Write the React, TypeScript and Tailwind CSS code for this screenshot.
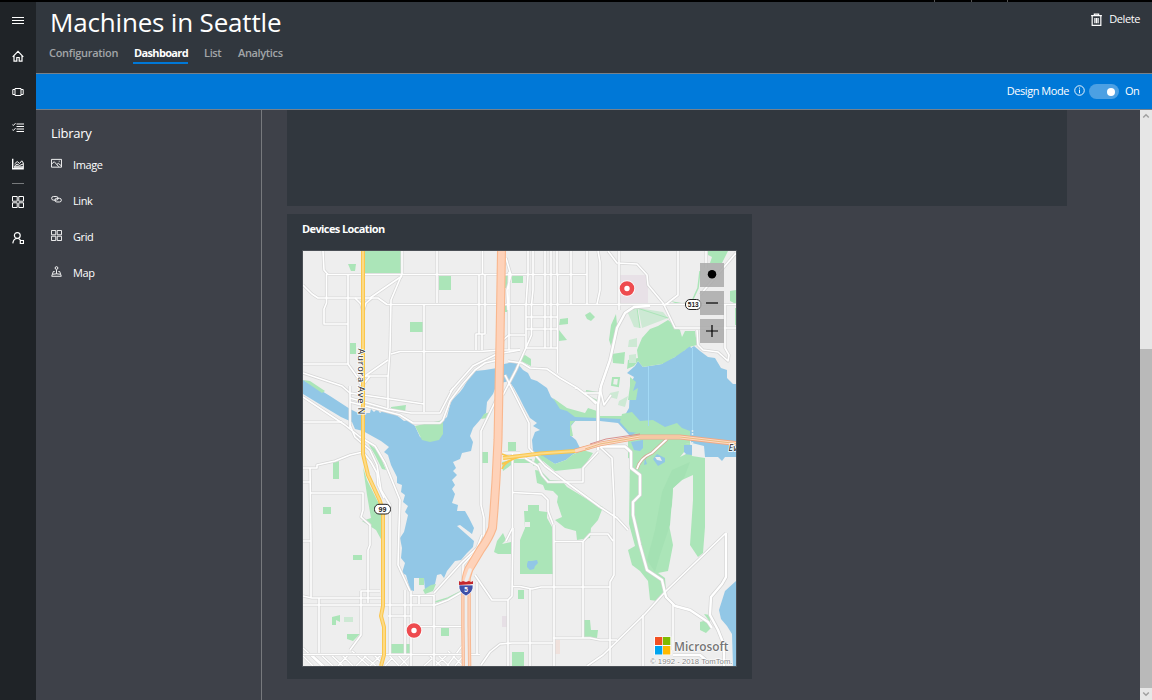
import React from "react";

const WATER = "#92c7e6";
const PARK = "#abe5b8";
const LIGHT_PARK = "#cde9d4";

const waters: string[] = [
  "303,380 312,385 330,396 350,409 358,413 370,413 371,409 374,412 377,409 380,413 384,410 388,412 393,413 399,417 404,421 408,420 415,426 420,437 430,441 440,437 443,420 447,417 450,405 452,400 460,392 463,388 469,378 475,371 485,370 497,368 504,364 513,362 518,364 523,370 528,373 531,379 537,381 547,388 551,397 557,402 567,410 580,415 600,418 617,418 625,415 629,408 630,390 633,386 631,383 634,377 627,373 635,366 638,361 643,367 662,364 665,361 675,357 677,353 685,350 688,341 691,348 694,346 700,351 708,357 715,358 721,368 727,370 727,378 733,384 736,384 736,457 725,457 722,461 718,457 705,457 704,446 692,443 689,438 660,438 630,436 618,423 600,421 575,421 571,426 570,435 576,440 581,450 572,455 566,460 555,464 543,457 533,451 532,440 535,432 540,430 533,426 537,423 530,418 524,407 519,397 514,388 509,381 497,384 493,394 487,402 486,413 473,428 470,436 473,442 471,451 462,453 460,459 453,462 456,468 453,471 457,475 452,480 455,485 452,489 455,494 452,503 458,505 457,511 465,511 469,518 474,528 472,534 460,525 457,526 474,541 473,547 467,553 461,560 455,561 447,571 444,578 441,574 437,575 435,584 430,590 425,591 424,578 419,585 419,578 414,578 414,591 410,590 408,582 406,575 402,573 405,563 401,558 402,548 400,538 404,532 405,528 408,515 405,512 408,506 403,502 405,495 401,492 402,485 397,483 397,477 391,465 388,455 384,452 389,447 381,441 372,436 363,431 355,429 352,422 341,417 326,408 303,394",
  "736,581 725,591 719,610 721,619 727,626 732,634 733,666 736,666",
];

const parks: string[] = [
  "364,251 402,251 402,274 364,273",
  "348,264 356,264 355,271 351,271",
  "439,276 451,276 451,290 439,290",
  "410,322 423,322 423,332 410,332",
  "350,343 356,343 356,354 350,354",
  "512,276 523,276 523,283 512,283",
  "505,276 508,276 507,288 504,288",
  "505,306 508,306 507,312 505,312",
  "560,319 568,318 568,324 559,325",
  "559,330 567,340 559,341",
  "585,315 590,312 595,317 591,321 587,319",
  "521,357 525,355 531,359 531,366 521,361",
  "391,407 406,405 405,412 391,409",
  "415,426 443,420 443,434 439,440 430,442 422,440",
  "333,462 339,461 339,479 333,479",
  "323,507 331,507 331,514 323,514",
  "363,467 367,480 377,500 382,508 382,541 376,530 362,521 371,518 367,495",
  "368,443 378,451 386,470 382,469 375,455",
  "482,452 488,452 488,463 482,463",
  "508,442 516,442 516,451 508,451",
  "481,419 484,414 490,412 487,418",
  "502,462 516,459 532,459 530,463 514,463 503,471",
  "353,555 362,555 362,560 353,560",
  "332,617 340,615 340,622 336,620 336,625 332,625",
  "347,634 360,634 353,641 347,639",
  "391,644 410,644 410,653 391,653",
  "441,627 449,627 449,636 441,636",
  "512,652 524,652 524,666 512,666",
  "494,552 497,541 503,533 506,540 502,544 511,542 511,554 498,554",
  "419,578 424,578 424,585 419,585",
  "423,590 431,585 436,584 433,591 425,594",
  "518,590 524,590 524,599 518,599",
  "584,620 590,620 591,630 598,630 597,638 584,638",
  "524,511 528,511 528,505 539,505 539,511 547,512 547,518 552,527 553,574 520,574 520,540 525,528",
  "533,466 543,461 555,471 583,468 593,453 583,450 572,455 566,460 555,464 543,456 536,455",
  "535,470 537,483 543,485 545,490 553,491 558,496 557,502 562,517 555,520 565,528 576,531 577,540 590,538 591,528 598,520 603,507 590,501 577,493 567,487 562,481 550,480 541,471",
  "553,398 567,408 585,413 588,408 597,411 600,416 622,416 622,419 575,417 567,411 560,409",
  "600,420 575,421 571,425 573,436 570,436 570,421",
  "628,438 645,426 653,426 665,427 677,423 682,428 690,431 690,443 672,447 660,455 650,463 628,458",
  "645,450 690,443 692,456 705,458 705,527 703,553 698,557 690,545 693,500 693,475 682,480 673,488 672,505 668,520 673,545 668,571 658,573 665,578 666,591 657,601 650,600 648,581 640,571 632,565 628,550 635,546 629,524 630,455",
  "658,326 668,320 680,330 682,337 685,331 695,331 697,345 689,347 685,350 675,357 662,364 643,367 638,361 634,366 627,369 628,360 638,358 637,350 642,338 650,329",
  "611,325 616,314 617,325 611,346 609,340",
  "612,354 625,352 624,364 613,363",
  "630,377 636,382 633,391 638,388 636,400 628,400 630,386",
  "708,251 728,251 722,263 710,263 712,257 708,255",
  "730,291 736,290 736,304 730,301",
  "670,301 682,303 693,302 693,305 680,305",
  "735,308 736,308 736,325 735,325",
  "622,414 632,412 640,421 653,420 665,427 640,433 629,432 620,422",
  "303,380 310,381 325,391 322,393",
  "700,622 707,620 711,628 706,633 700,630",
  "704,614 710,615 710,622",
];

const lightParks: string[] = [
  "627,311 637,308 640,328 634,327",
  "638,308 663,312 668,318 642,328",
  "629,340 637,338 637,347 628,347",
  "629,355 636,354 636,363 629,363",
  "610,393 619,391 617,399 609,397",
  "619,401 628,396 625,407 618,405",
  "344,617 353,617 353,622 344,622",
];

const roads: string[] = [
  "M323,251 L324,270 L328,274.5 H587",
  "M326.500,274 V303 L324,309 V324 H348",
  "M348,274 V364 M350,386 V428",
  "M303,285 L312,294 L318,298 H378 L387,304.500 H736",
  "M402,251 V274 L391,300 L390,350 L388,378 V408",
  "M402,276 L370,298 M355,298 L361,304 L363,312 M372,298 L366,303 L363,312",
  "M437,251 V303",
  "M424,305 V412",
  "M391,354 L400,351.500 H480 L500,350 H520",
  "M303,364 H348 L358,378 L365,376 L388,360",
  "M365,376 H388 M357,378 L362,386 L370,376",
  "M303,373 L342,386 L350,393 L424,404 M350,398 L388,409 L411,413 H440 L453,388",
  "M482.500,251 V275 M479,275 V334 M485,275 V334 M476,350 V334 H485 M482,334 V350",
  "M506,258 L511,275 L507,290 L508,310 M509,272 V350",
  "M528,251 V275 L526,305 V348",
  "M533,251 V290 L531.500,305 V335 L525,350 L516,370 L503,395",
  "M545,251 V348 M551,251 V348 M557,251 V275 M571,251 V304 M587,251 V304",
  "M526,317 H557 M526,329 H557 M526,348 H557 M503,340 L509,335 H525",
  "M557.500,275 V373",
  "M598,251 L600,262 V290 L597,304",
  "M508,361 L522,363 L530,368 L547,369 L560,378 L577,388 L597,403 M583,393 H600",
  "M498,360 L485,363 L475,370 L462,385 L450,401 L443,420 L440,423 H413 L400,415 L350,402",
  "M450,392 L473,366 L497,354 L520,350",
  "M303,422 H342",
  "M303,397 L345,425 L360,437 L375,446 L385,463 L400,500 L399,528 L398,565 L410,591",
  "M350,425 L355,437 L370,450 L377,465 L381,490 L390,505 V654",
  "M363,452 L371,462 L377,473 L378,485 L384,498",
  "M303,468 H317 V465 L335,461 L350,455 L363,452",
  "M303,482 H310 M310,468 L311,541 V597 M303,541 H311",
  "M311,493 H363 V510 L361,517 L370,525 V545 L368,550 V603",
  "M303,596 L312,598 H382 M303,605 H435 L448,600 L462,592",
  "M319,598 V653 M361,591 V635 L350,650 M361,591 H380",
  "M303,654.500 H480",
  "M388,616 H411 M411,591 V666 M405,590 V654 M410,595.500 H434 M419,595 V604 M434,595 V666",
  "M434,593 L462,562 L477,548 L482,535 M420,626.500 H462 M463,585 V565 L475,552",
  "M475,575 L488,594 L492,600 H508 L512,596 L513,528 M508,600 V666 M477,582 V654",
  "M513,586.500 H520 L532,589 L541,587 H610",
  "M553,643 H512 L500,644 L490,652 L481,665",
  "M530,589 V666 M554,525 V666",
  "M554,541.500 H583 L590,534 H608 L613,541 M583,541 V638",
  "M600,447 L612,458 L614,500 V575 L610,582 V663",
  "M553,638 H590 L600,640 H617",
  "M587,666 L603,655 L645,614 L666,591 L726,533",
  "M643,615 V666",
  "M673,604 V650",
  "M600,507 L617,518 L628,530",
  "M505,375 L529,423 V448 L545,466 L570,485 L600,507",
  "M598,452 L583,468 V482 H548 L542,475 L538,466 L525,458",
  "M496,400 L481,431 V505 L484,518 V545",
  "M512.500,453 V528 L506,541 M503,453 H520",
  "M513,492.500 L542,494 L548,500 V511 L553,524",
  "M619,251 V310 M608,251 L617,263 L637,264 L647,275 L648,285 L663,303 L675,328 H736",
  "M678,251 V295 L665,305 M706,251 V268",
  "M736,253 L700,295",
  "M697,330 L698,345 L703,350 L718,352 L728,361 L729,355 L725,348 V305",
  "M575,388 L577,388 M596,404 L590,398 M600,388 L604,405 L611,395",
];

const majorRoads: string[] = [
  "M650,306 L634,307 L625,313 L617,328 L610,360 L601,386 L598,405 V450",
  "M600,446.500 H625 L631,452 V468 L640,475 V495 L633,502 V515 L640,545 L647,570 L662,580 L666,597 L675,606 L690,610 L708,622 L712,628",
  "M726,533 V577 L722,584 L711,597 L710,615 L718,630 L724,645 V666",
  "M673,655 H700 L706,660",
];

const cityStreets =
  "M303,648 L322,666 M303,656 L313,666 M311,654 L324,666 M320,654 L333,666 M330,654 L343,666 M341,654 L353,666 M352,651 L369,666 M362,654 L376,666 M373,654 L383,664 M338,666 L350,653 M356,666 L368,654 M370,666 L381,655 M388,654 L399,666 M397,654 L408,666 M385,666 L392,658 M400,666 L411,655 M428,654 L441,666 M437,654 L449,666 M448,651 L463,666 M424,666 L437,654 M435,666 L447,655 M447,666 L462,646 M455,666 L464,655";

const aurora = "M363,251 V454 L368,475 L380,501 L383,512 V606 L381,616 L384,627 V655 L381,666";
const i5 = "M501.500,251 L500,340 L499,388 L498,440 L496,480 L494,510 L492.500,528 Q489,538 481,549 L469,569 Q465,578 466,590";
const hwyYellow = "M503,458 L540,453.500 L575,451 L590,447";
const hwyOrange = "M575,451 L600,444 L640,437 L680,437 L736,443.500";

function Marker({ x, y }: { x: number; y: number }) {
  return (
    <g>
      <circle cx={x} cy={y} r="8.300" fill="#fff" opacity="0.8" />
      <circle cx={x} cy={y} r="5" fill="#fff" stroke="#ee4b4f" strokeWidth="4.600" />
    </g>
  );
}

function SeattleMap() {
  return (
    <svg viewBox="303 251 433 415" className="block h-[415px] w-[433px]" fill="none">
      <rect x="303" y="251" width="433" height="415" fill="#eeeeee" />
      <rect x="620" y="275" width="28" height="29" fill="#e8e1e7" />
      <rect x="502" y="616" width="5" height="11" fill="#e6dfe5" />
      <rect x="554" y="640" width="6" height="14" fill="#f0e1dc" />
      {waters.map((p) => (
        <polygon key={p} points={p} fill={WATER} />
      ))}
      {parks.map((p) => (
        <polygon key={p} points={p} fill={PARK} />
      ))}
      <path d="M527,564 L528,561 L532,561 L537,560 L538,563 L535,566 L534,569 L530,570 L527,567Z" fill={WATER} />
      <rect x="525" y="522" width="5" height="5" fill="#eeeeee" />
      <path d="M662,492 L672,470 L690,462 L684,478 L673,488 L670,525 L660,555 L655,572 L647,560 L655,530Z" fill="#a4e1b3" />
      {lightParks.map((p) => (
        <polygon key={p} points={p} fill={LIGHT_PARK} />
      ))}
      <path d="M627,311 L637,308 L640,328 M637,308 L668,318" stroke={PARK} strokeWidth="1" />
      <path d="M575,424 H612 V434 H602 L592,444 L578,440Z" fill="#eeeeee" />
      <path d="M700,271 L698,288 L693,299 M435,602 L448,598 L462,591" stroke={PARK} strokeWidth="1.500" />
      <path d="M586,391 L598,393 M587,396 L597,401 M613,378 L619,378 L618,386 L612,385Z" stroke={PARK} strokeWidth="2" />
      <path d="M631,442 L643,440 V448 L640,451 L634,450Z M653,459 L657,454 L665,458 L665,462 L658,466Z M645,458 L647,464 L644,465Z M684,445 H692 V455 L684,454Z" fill={WATER} />
      <path d="M655,457 L660,457 L662,461 L657,460Z M680,457 L684,452 L686,454Z" fill="#eeeeee" />
      <path d="M648.500,366 V426 M692.500,348 V430" stroke="#a3d9f5" strokeWidth="1" />
      <path d="M692.500,430 V443" stroke="#e2eef2" strokeWidth="1.500" strokeDasharray="2 1" />

      <path d={cityStreets} stroke="#d6d6d6" strokeWidth="2.500" />
      <path d={cityStreets} stroke="#fff" strokeWidth="1.400" />
      <g stroke="#d7d7d7" strokeWidth="3.100" strokeLinejoin="round">
        {roads.map((d) => (
          <path key={d} d={d} />
        ))}
      </g>
      <g stroke="#d4d4d4" strokeWidth="3.800" strokeLinejoin="round">
        {majorRoads.map((d) => (
          <path key={d} d={d} />
        ))}
      </g>
      <g stroke="#fff" strokeWidth="1.600" strokeLinejoin="round">
        {roads.map((d) => (
          <path key={d} d={d} />
        ))}
      </g>
      <g stroke="#fff" strokeWidth="2.400" strokeLinejoin="round">
        {majorRoads.map((d) => (
          <path key={d} d={d} />
        ))}
      </g>

      <path d="M637,469 Q640,458 652,453 L667,439" stroke="#d3a997" strokeWidth="3.200" />
      <path d="M637,469 Q640,458 652,453 L667,439" stroke="#fff" strokeWidth="1.800" />
      <path d={aurora} stroke="#fbc64c" strokeWidth="4" strokeLinejoin="round" />
      <path d={aurora} stroke="#fddb87" strokeWidth="1.900" strokeLinejoin="round" />
      <path d="M502,469 Q505,461 520,457 M502,464 L520,456 M502,454 L512,458" stroke="#fbc64c" strokeWidth="1.700" />
      <path d={hwyYellow} stroke="#fbc64c" strokeWidth="4" />
      <path d={hwyYellow} stroke="#fddb87" strokeWidth="1.800" />
      <path d={hwyOrange} stroke="#f0ab85" strokeWidth="4.800" />
      <path d={hwyOrange} stroke="#fdd9c4" strokeWidth="3" />
      <path d="M585,449 L600,444 L640,437 L680,437 L736,443.500" stroke="#e6b878" strokeWidth="0.900" />
      <path d="M590,444 L606,439 L640,434" stroke="#d9928f" strokeWidth="1" />
      <path d="M466,586 V625 L466.500,666" stroke="#f7b68e" strokeWidth="9.600" />
      <path d="M466,586 V625 L466.500,666" stroke="#fdd2b8" strokeWidth="7.800" />
      <path d="M466,595 V625 L466.500,666" stroke="#f3b590" strokeWidth="4.600" />
      <path d="M466,595 V625 L466.500,666" stroke="#eeeeee" strokeWidth="3" />
      <path d={i5} stroke="#f9b78e" strokeWidth="9" />
      <path d={i5} stroke="#fed2b9" strokeWidth="6.800" />
      <path d="M470,570 L466,581" stroke="#eeeeee" strokeWidth="3.500" strokeLinecap="round" />

      <text
        transform="translate(358.300 348.500) rotate(90)"
        fontFamily="Noto Sans, sans-serif"
        fontSize="9.200"
        textLength="66"
        fill="#333"
        stroke="#fff"
        strokeWidth="1.600"
        paintOrder="stroke"
      >
        Aurora Ave N
      </text>
      <text x="728.500" y="450.500" fontFamily="Noto Sans, sans-serif" fontStyle="italic" fontSize="9" fill="#222" stroke="#fff" strokeWidth="1.500" paintOrder="stroke">
        Ev
      </text>

      <rect x="685.500" y="299.500" width="15.500" height="10" rx="4.500" fill="#fff" stroke="#222" />
      <text x="693.300" y="307" textAnchor="middle" fontFamily="Liberation Sans, sans-serif" fontWeight="700" fontSize="6.500" fill="#222">
        513
      </text>
      <rect x="374.500" y="504.300" width="16" height="9.700" rx="4.500" fill="#fff" stroke="#222" />
      <text x="382.500" y="511.800" textAnchor="middle" fontFamily="Liberation Sans, sans-serif" fontWeight="700" fontSize="7" fill="#222">
        99
      </text>

      <path d="M459,585 H473 Q474,592 466,596 Q458,592 459,585Z" fill="#3f51a8" stroke="#fff" strokeWidth="0.700" />
      <path d="M459,585 V581 L461,582 L463,581 L466,582 L469,581 L471,582 L473,581 V584Z" fill="#c3272d" />
      <text x="466" y="592" textAnchor="middle" fontFamily="Liberation Sans, sans-serif" fontWeight="700" fontSize="6.500" fill="#fff">
        5
      </text>

      <Marker x={627} y={288.500} />
      <Marker x={414} y={630.500} />

      <rect x="654" y="636.500" width="17.500" height="18.500" fill="#fff" opacity="0.8" />
      <rect x="655" y="637" width="7.300" height="8" fill="#f25022" />
      <rect x="663" y="637" width="7.300" height="8" fill="#7fba00" />
      <rect x="655" y="646" width="7.300" height="8.500" fill="#00a4ef" />
      <rect x="663" y="646" width="7.300" height="8.500" fill="#ffb900" />
      <text x="674" y="650.500" fontFamily="Open Sans, sans-serif" fontWeight="600" fontSize="12" textLength="54.500" lengthAdjust="spacingAndGlyphs" fill="#747474" stroke="#fff" strokeWidth="1" paintOrder="stroke">
        Microsoft
      </text>
      <text x="650" y="664" fontFamily="Liberation Sans, sans-serif" fontSize="7.900" textLength="82.500" lengthAdjust="spacingAndGlyphs" fill="#858585" stroke="#fff" strokeWidth="1" paintOrder="stroke">
        © 1992 - 2018 TomTom.
      </text>
    </svg>
  );
}

type IconName = "menu" | "home" | "device" | "rules" | "chart" | "grid" | "user" | "image" | "link" | "map" | "trash" | "info";

const iconPaths: Record<IconName, React.ReactNode> = {
  menu: <path d="M0 3.500H12M0 6.500H12M0 9.500H12" />,
  home: <path d="M.7 6.800 6 1.300 11.300 6.800M2 5.700V11.200H4.800V7.500H7.200V11.200H10V5.700" strokeWidth="1.200" />,
  device: <path d="M3 2.500H9V9.500H3ZM3 3.500H.8V8.500H3M9 3.500H11.200V8.500H9" />,
  rules: <path d="M4.500 2H12M4.500 4.500H12M4.500 7H12M4.500 9.500H12M.3 2.500 1.300 3.500 3.500 1.200M.3 7.500 1.300 8.500 3.500 6.200" />,
  chart: (
    <>
      <path d="M.7 .8V10.800H11.800" strokeWidth="1.400" />
      <path d="M2.500 6 5.200 3.500 7.500 5.500 9.800 2.800 11.300 5V10M2.500 8 5 6 7.500 7.500 11 6" />
      <path d="M2 8 5 7.500 8 8.200 11.300 8V10.500H2Z" fill="currentColor" fillOpacity=".8" stroke="none" />
    </>
  ),
  grid: <path d="M.5 .5H5.200V5.200H.5ZM6.800 .5H11.500V5.200H6.800ZM.5 6.800H5.200V11.500H.5ZM6.800 6.800H11.500V11.500H6.800Z" />,
  user: (
    <>
      <circle cx="5.300" cy="3.500" r="2.900" strokeWidth="1.200" />
      <path d="M.8 11.300C1.200 8.500 3 6.500 5.300 6.500S8 7.500 8.500 8.300M8.300 8.500H11.500V11.600H8.300Z" strokeWidth="1.200" />
    </>
  ),
  image: <path d="M.5 1.500H11.500V10H.5ZM.8 6.500 3.500 4 8.500 9.500M6.500 7 8 5.800 11.200 8.500M8.500 3.500H9.500" />,
  link: (
    <>
      <rect x=".7" y="2.700" width="7" height="4" rx="2" />
      <rect x="4.300" y="4.700" width="7" height="4" rx="2" />
    </>
  ),
  map: (
    <>
      <circle cx="6" cy="2.200" r="1.500" />
      <path d="M6 4V8.500M4 6H2.500L.8 11.200H11.200L9.500 6H8M2 9 6 8.500 10 9" />
    </>
  ),
  trash: <path d="M1 2.500H11M4 2.500V1H8V2.500M2 2.500V11.400H10V2.500M4.500 4.500V9.500M6 4.500V9.500M7.500 4.500V9.500" strokeWidth="1.100" />,
  info: (
    <>
      <circle cx="6" cy="6" r="5.200" />
      <path d="M6 5V9M6 2.800V4" />
    </>
  ),
};

function Icon({ name, className = "size-3" }: { name: IconName; className?: string }) {
  return (
    <svg viewBox="0 0 12 12" className={className} fill="none" stroke="currentColor" strokeWidth="1">
      {iconPaths[name]}
    </svg>
  );
}

function Sidebar() {
  const top: IconName[] = ["menu", "home", "device", "rules", "chart"];
  const bottom: IconName[] = ["grid", "user"];
  return (
    <nav className="flex w-9 shrink-0 flex-col items-center bg-[#1f2327] text-white">
      {top.map((n) => (
        <div key={n} className="flex h-9 w-full items-center justify-center">
          <Icon name={n} />
        </div>
      ))}
      <div className="mt-px h-px w-3 bg-[#777a7c]" />
      {bottom.map((n) => (
        <div key={n} className="flex h-9 w-full items-center justify-center">
          <Icon name={n} />
        </div>
      ))}
    </nav>
  );
}

function Header() {
  return (
    <header className="flex h-[71px] shrink-0 justify-between bg-[#31373e]">
      <div className="pl-[13px]">
        <h1 className="h-[42px] pl-[1px] text-[26px] leading-[41px] tracking-[-0.18px] whitespace-nowrap">Machines in Seattle</h1>
        <div className="flex text-[11px] leading-[18px] font-semibold whitespace-nowrap text-[#a2a5a8]">
          <span className="w-[84px] tracking-[-0.3px]">Configuration</span>
          <span className="h-5 w-[55px] border-b-2 border-[#0078d7] pl-px font-bold tracking-[-0.65px] text-white">Dashboard</span>
          <span className="ml-4 w-[34px] tracking-[-0.35px]">List</span>
          <span className="tracking-[-0.35px]">Analytics</span>
        </div>
      </div>
      <button className="flex h-[35px] items-center gap-[6px] pr-3 text-[11px] tracking-[-0.4px]">
        <Icon name="trash" className="size-[13px]" />
        <span>Delete</span>
      </button>
    </header>
  );
}

function DesignBar() {
  return (
    <div className="flex h-[37px] shrink-0 items-center justify-end border-y border-[#77818a] bg-[#0078d7] text-[11px]">
      <span className="tracking-[-0.45px] whitespace-nowrap">Design Mode</span>
      <Icon name="info" className="mr-1 mb-[3px] ml-[5px] size-[11px]" />
      <span className="flex h-[15px] w-[30px] items-center justify-end rounded-full bg-[#4ca0e3] pr-1">
        <span className="size-2 rounded-full bg-white" />
      </span>
      <span className="mb-px w-[33px] pl-[6px] tracking-[-0.5px]">On</span>
    </div>
  );
}

function Library() {
  const items: { icon: IconName; label: string }[] = [
    { icon: "image", label: "Image" },
    { icon: "link", label: "Link" },
    { icon: "grid", label: "Grid" },
    { icon: "map", label: "Map" },
  ];
  return (
    <aside className="w-[226px] shrink-0 border-r border-[#77797d] pt-3 pl-[15px]">
      <h2 className="h-[25px] text-[13px] leading-[22px] tracking-[-0.25px]">Library</h2>
      {items.map(({ icon, label }) => (
        <div key={label} className="flex h-9 items-center gap-[11px] text-[11px] tracking-[-0.4px]">
          <Icon name={icon} className="mb-[3px] size-[11px]" />
          <span>{label}</span>
        </div>
      ))}
    </aside>
  );
}

function MapControls() {
  return (
    <div className="absolute top-3 right-3 flex flex-col gap-1">
      {["M12 11.300h.01", "M6 12H18", "M6 12H18M12 6V18"].map((d, i) => (
        <button key={d} className="size-6 bg-[#a9a9a9]/85 text-black">
          <svg viewBox="0 0 24 24" className="size-6" fill="none" stroke="currentColor" strokeWidth={i === 0 ? 8.500 : 1.200} strokeLinecap={i === 0 ? "round" : "butt"}>
            <path d={d} />
          </svg>
        </button>
      ))}
    </div>
  );
}

function Scrollbar() {
  return (
    <div className="flex w-3 shrink-0 flex-col items-center bg-[#e6e6e6]">
      <svg viewBox="0 0 12 12" className="size-3 text-[#a0a0a0]" fill="none" stroke="currentColor" strokeWidth="1.500">
        <path d="M3.200 7.500 6 4.700 8.800 7.500" />
      </svg>
      <div className="mt-[227px] w-3 flex-1 bg-[#b9b9b9]" />
      <svg viewBox="0 0 12 12" className="size-3 text-[#a0a0a0]" fill="none" stroke="currentColor" strokeWidth="1.500">
        <path d="M3.200 4.500 6 7.300 8.800 4.500" />
      </svg>
    </div>
  );
}

export default function App() {
  return (
    <div className="flex h-[700px] w-[1152px] flex-col overflow-hidden bg-[#3e4149] font-['Open_Sans',sans-serif] text-white">
      <div className="flex h-[2px] shrink-0 bg-black pl-[934px]">
        <i className="h-[2px] w-px bg-[#555]" />
        <i className="ml-9 h-[2px] w-px bg-[#555]" />
        <i className="ml-[35px] h-[2px] w-px bg-[#555]" />
      </div>
      <div className="flex min-h-0 flex-1">
        <Sidebar />
        <div className="flex min-w-0 flex-1 flex-col">
          <Header />
          <DesignBar />
          <div className="flex min-h-0 flex-1">
            <Library />
            <main className="flex flex-1 flex-col gap-2 pl-[25px]">
              <section className="h-24 w-[780px] shrink-0 bg-[#31373e]" />
              <section className="h-[465px] w-[465px] shrink-0 bg-[#31373e] px-[15px]">
                <h3 className="h-9 pt-[6px] text-[11px] leading-[18px] font-bold tracking-[-0.6px]">Devices Location</h3>
                <div className="relative w-[435px] border border-[#4a4f55]">
                  <SeattleMap />
                  <MapControls />
                </div>
              </section>
            </main>
            <Scrollbar />
          </div>
        </div>
      </div>
    </div>
  );
}
